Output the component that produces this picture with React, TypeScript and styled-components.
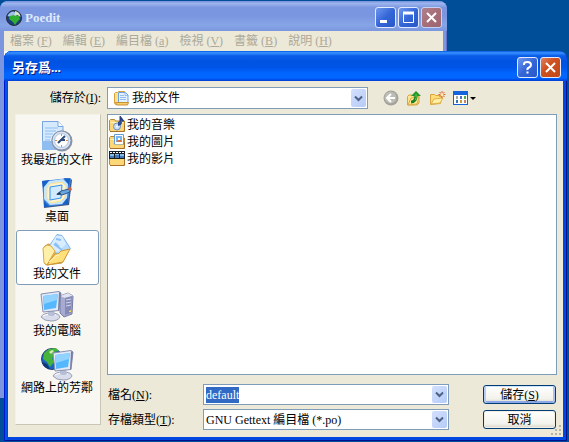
import React from "react";
import styled, { createGlobalStyle, css } from "styled-components";

const Global = createGlobalStyle`
  * { box-sizing: border-box; }
  html, body, #root { height: 100%; margin: 0; }
  body { overflow: hidden; }
  button, input, select { font: inherit; color: inherit; margin: 0; }
`;

const Desktop = styled.div`
  position: relative;
  height: 100%;
  background: #004e98;
  font: 12px/16px "Liberation Serif", "Noto Sans CJK TC", serif;
  color: #000;
`;

const Window = styled.section<{ $active?: boolean }>`
  position: absolute;
  display: flex;
  flex-direction: column;
  border-radius: 8px 8px 0 0;
  ${(p) =>
    p.$active
      ? css`
          inset: 51px 2px 1px 4px;
          padding: 0 4px 4px;
          background: #0046e0;
          box-shadow: inset 1px 0 #0019cf, inset -1px -1px #00138c, inset 3px 0 #0054e3;
        `
      : css`
          inset: 1px 122px 44px 0;
          padding: 0 4px 4px;
          background: #7b96df;
          box-shadow: inset -1px 0 #6375c8;
        `}
`;

const TitleBar = styled.header<{ $active?: boolean }>`
  display: flex;
  align-items: center;
  gap: 2px;
  flex: none;
  height: 30px;
  margin: 0 -4px;
  padding: 3px 5px 0 5px;
  border-radius: 8px 8px 0 0;
  color: #dfe9fa;
  background: linear-gradient(#7590dc 0, #9db5ee 8%, #7b96e0 22%, #7b96e0 50%, #86a5e6 80%, #7b96df 100%);
  ${(p) =>
    p.$active &&
    css`
      padding: 3px 6px 0 8px;
      color: #fff;
      text-shadow: 1px 1px #0a1883;
      background: linear-gradient(#0058e6 0, #3a93ff 6%, #0a5ce8 16%, #0053e1 35%, #0055e8 55%, #0066ff 75%, #0066ff 90%, #003dd7 100%);
    `}
`;

const Title = styled.h1`
  flex: 1;
  margin: 0;
  font-size: 13px;
  line-height: 18px;
  font-weight: bold;
`;

const CaptionButton = styled.button<{ $tone: "blue" | "red" | "faded" }>`
  display: block;
  width: 21px;
  height: 21px;
  padding: 0;
  border: 1px solid #fff;
  border-radius: 3px;
  background: ${(p) =>
    p.$tone === "red"
      ? "linear-gradient(135deg, #e08060, #d0511f 40%, #c04818)"
      : p.$tone === "faded"
        ? "linear-gradient(135deg, #b08090, #a66f78 50%, #9c6470)"
        : "linear-gradient(135deg, #6f98ee, #3566d8 50%, #2858c8)"};
  border-color: ${(p) => (p.$tone === "faded" ? "#c5d2f4" : "#e2eaff")};
  svg { display: block; width: 19px; height: 19px; }
`;

const MenuBar = styled.nav`
  display: flex;
  gap: 11px;
  height: 20px;
  padding-left: 6px;
  background: #ece9d8;
`;

const MenuItem = styled.button`
  flex: none;
  padding: 0;
  border: 0;
  background: none;
  color: #aca899;
  line-height: 20px;
  white-space: nowrap;
`;

const AppBody = styled.div`
  flex: 1;
  background: #fff;
`;

const DialogBody = styled.form`
  flex: 1;
  min-height: 0;
  display: grid;
  grid-template-columns: 86px minmax(0, 1fr);
  grid-template-rows: 20px minmax(0, 1fr);
  column-gap: 6px;
  row-gap: 6px;
  padding: 7px 6px 3px 7px;
  background: #ece9d8;
`;

const FieldLabel = styled.label<{ $end?: boolean }>`
  white-space: nowrap;
  line-height: 20px;
  text-align: ${(p) => (p.$end ? "right" : "left")};
`;

const Toolbar = styled.div`
  display: flex;
  align-items: center;
`;

const Combo = styled.div`
  position: relative;
  display: flex;
  align-items: center;
  height: 21px;
  border: 1px solid #7f9db9;
  background: #fff;
`;

const LocationCombo = styled(Combo)`
  flex: 0 1 261px;
  height: 22px;
  margin-right: 15px;
  padding-left: 5px;
  > svg { flex: none; }
`;

const Select = styled.select`
  appearance: none;
  flex: 1;
  min-width: 0;
  height: 18px;
  padding: 0 18px 0 2px;
  border: 0;
  outline: 0;
  background: transparent;
`;

const FileInput = styled.input`
  flex: 1;
  min-width: 0;
  height: 16px;
  padding: 0 18px 0 2px;
  border: 0;
  outline: 0;
  background: transparent;
  &::selection { color: #fff; background: #316ac5; }
`;

const Arrow = styled.span`
  position: absolute;
  right: 1px;
  top: 1px;
  bottom: 1px;
  width: 15px;
  display: grid;
  place-items: center;
  border-radius: 2px;
  background: linear-gradient(135deg, #d3e0fd, #b5cbf8);
  pointer-events: none;
`;

const ToolButton = styled.button`
  display: flex;
  align-items: center;
  height: 20px;
  margin-right: 7px;
  padding: 0;
  border: 0;
  background: none;
`;

const Places = styled.nav`
  display: flex;
  flex-direction: column;
  margin-bottom: 9px;
  border: 1px solid;
  border-color: #f4f2e8 #c9c6b8 #c9c6b8 #f4f2e8;
  background: #f8f7f2;
`;

const Place = styled.button<{ $selected?: boolean }>`
  display: flex;
  flex-direction: column;
  align-items: center;
  flex: 0 0 57px;
  margin-right: 1px;
  padding: 3px 1px 0 0;
  border: 1px solid transparent;
  border-radius: 3px;
  background: transparent;
  line-height: 15px;
  white-space: nowrap;
  ${(p) =>
    p.$selected &&
    css`
      flex-basis: 55px;
      margin: 1px 1px 1px 0;
      padding-top: 2px;
      border-color: #7f9db9;
      background: #fff;
    `}
  svg { flex: none; }
`;

const Main = styled.div`
  display: flex;
  flex-direction: column;
  min-width: 0;
`;

const FileList = styled.ul`
  flex: 1;
  margin: 0;
  padding: 1px;
  list-style: none;
  border: 1px solid #7f9db9;
  background: #fff;
`;

const FileRow = styled.li`
  display: flex;
  align-items: center;
  gap: 1px;
  height: 17px;
`;

const Fields = styled.div`
  display: grid;
  grid-template-columns: 94px minmax(0, 246px) minmax(73px, 1fr);
  grid-auto-rows: 21px;
  align-items: center;
  row-gap: 4px;
  column-gap: 1px;
  padding: 9px 1px 4px;
`;

const Action = styled.button<{ $primary?: boolean }>`
  justify-self: end;
  width: 73px;
  height: 19px;
  padding: 0;
  border: 1px solid #003c74;
  border-radius: 3px;
  line-height: 16px;
  background: linear-gradient(#fff, #f3f2ec 75%, #d8d3c8);
  box-shadow: ${(p) => (p.$primary ? "inset 0 1px #cee7ff, inset 2px 0 #b6cdf2, inset -2px 0 #a9c2ee, inset 0 -2px #8aa9e6" : "inset 0 0 0 1px #f0eee5")};
`;

const Grip = styled.svg`
  position: absolute;
  right: 5px;
  bottom: 5px;
`;

const Chevron = () => (
  <Arrow>
    <svg width="9" height="7" viewBox="0 0 9 7" aria-hidden="true">
      <path d="M1 1.5 4.5 5 8 1.5" fill="none" stroke="#4d6185" strokeWidth="2" />
    </svg>
  </Arrow>
);

type CaptionKind = "min" | "max" | "close" | "help";
const Caption = ({ kind }: { kind: CaptionKind }) => (
  <svg viewBox="0 0 19 19" fill="none" stroke="#fff" strokeWidth="2" aria-hidden="true">
    {kind === "min" && <path d="M4 13.5h7" strokeWidth="3" />}
    {kind === "max" && (
      <>
        <path d="M4 5h11" strokeWidth="3" />
        <path d="M4.5 4v10.500h10V4" strokeWidth="1" />
      </>
    )}
    {kind === "close" && <path d="m5 5 9 9m0-9-9 9" />}
    {kind === "help" && <path d="M6 7V6q0-2 3.500-2T13 7q0 1.500-2 2.500T9.500 12M9.500 13.500v2" />}
  </svg>
);

const Globe = () => (
  <svg width="18" height="18" viewBox="0 0 18 18" aria-hidden="true">
    <circle cx="9" cy="9" r="7.500" fill="#1c3f7c" stroke="#272d38" />
    <path d="M2.500 7q2-4.500 6-4.500l3 2-4 4z" fill="#9fbfe8" />
    <path d="m5 7 4-1 5 1 1 3-3 3-2 3-2-3-4-3z" fill="#2fb032" />
    <path d="M10 2q5 1 5.500 6l-3-2-3 1z" fill="#d5e6c2" />
  </svg>
);

const DocumentsIcon = () => (
  <svg width="17" height="16" viewBox="0 0 17 16" aria-hidden="true">
    <path d="M1.500 13V3.500l1-1h2l1-1h6V5l-6 9.500h-3z" fill="#ffe38b" stroke="#d9a03c" />
    <path d="M5.500 2.500h7l2.500 2.500v7.500H5.500z" fill="#e4f1ff" stroke="#6ea2df" />
    <path d="M12 3v2.500h3M7 5.500h4M7 7.500h6M7 9.500h6" fill="none" stroke="#94bdee" />
    <path d="M2.500 12.500h13l-1 2.500H3.500z" fill="#f7cf68" stroke="#c9913a" />
  </svg>
);

const FolderIcon = ({ kind }: { kind: "music" | "pictures" | "video" }) => (
  <svg width="17" height="17" viewBox="0 0 17 17" aria-hidden="true">
    <path d="M.5 14V4.500l1-1h4l1 1.500h9v9l-1 1.500h-13z" fill="#fbd778" stroke="#bf852f" />
    <path d="M1.500 6.500h13" stroke="#fff2bd" />
    <path d="M1 15.500h14.500V9" fill="none" stroke="#a9712a" />
    {kind === "music" && (
      <>
        <circle cx="8" cy="10.500" r="3.500" fill="#c9dcf5" stroke="#7391bd" />
        <circle cx="8" cy="10.500" r="1" fill="#fff" />
        <path d="M11.500 8V1.500l3 4" fill="none" stroke="#263d80" strokeWidth="2" />
        <path d="m9 6 2-1 2 1-1 3-3 1z" fill="#2d4f96" />
      </>
    )}
    {kind === "pictures" && (
      <>
        <path d="M5.500 1.500h9v10h-9z" fill="#fff" stroke="#659bd5" />
        <path d="M7 3h6v6H7z" fill="#7ab6f3" />
        <path d="M9 5h2v2H9z" fill="#fff" />
        <path d="m7 9 2-2h3l1 2z" fill="#cc7447" />
        <path d="M2 11.500h12V15H2z" fill="#fbd778" />
      </>
    )}
    {kind === "video" && (
      <>
        <path d="M0 1h16v8H0z" fill="#171d25" />
        <path d="M1 2.500h14" stroke="#fff" strokeDasharray="2 1" />
        <path d="M1 4h4v4H1zM6 4h4v4H6zM11 4h4v4h-4z" fill="#4479b8" />
        <path d="M1 4h4v2H1zM6 4h4v1H6zM11 4h4v2h-4z" fill="#88b8ea" />
      </>
    )}
  </svg>
);

const Screen = () => (
  <>
    <path d="M1 27q2-4 10-4t9 4q-2 4-9 4t-10-4z" fill="#d9ddeb" stroke="#969cb4" />
    <path d="M3 26q5-3 13-1" fill="none" stroke="#fff" />
    <path d="m8 20 6-1 1 6q-3 2-7 0z" fill="#b6bdd5" />
    <path d="m1 4 18-2.500 2 1.500-2 17.500L3 22z" fill="#e4e9f8" stroke="#8891b0" />
    <path d="m3 6 15-2-2 14-12 2z" fill="#55b8ff" />
    <path d="m3 6 15-2-1 6L4 14z" fill="#91d2ff" />
    <path d="m19 2 2 1-2 18-1-1z" fill="#747da7" />
  </>
);

type PlaceKind = "recent" | "desktop" | "documents" | "computer" | "network";
const PlaceIcon = ({ kind }: { kind: PlaceKind }) => (
  <svg width="34" height="34" viewBox="0 0 34 34" aria-hidden="true">
    {kind === "recent" && (
      <>
        <path d="M2.500 2.500H18l5 5v23H2.500z" fill="#d6eaff" stroke="#78a5df" />
        <path d="M2 22h21v9H2z" fill="#90bdf0" />
        <path d="M18 2.500v5h5" fill="#fff" stroke="#78a5df" />
        <path d="M5 9h13M5 12h11M5 15h8M5 18h6M5 21h5M5 24h5" stroke="#8fbcf0" />
        <circle cx="22" cy="22" r="10.500" fill="#8995ab" />
        <circle cx="21.500" cy="21.500" r="9.500" fill="#dce3ee" stroke="#8391a9" />
        <circle cx="21.500" cy="21.500" r="7" fill="#fff" stroke="#a8c5e7" />
        <path d="M21.500 15v2m0 9v2M15 21.500h2m9 0h2" stroke="#ef863a" />
        <path d="m25 17-4 4h4m-4 0-3 3" fill="none" stroke="#304a79" strokeWidth="2" />
      </>
    )}
    {kind === "desktop" && (
      <>
        <path d="m3 6 27-4 2 2-3 25-25 3z" fill="#3c5583" />
        <path d="M2 5 29 2l2 1-3 25-24 3z" fill="#4286de" />
        <path d="m2 5 8-1-7 8zM24 2l6 1-1 7zM4 25l6 6-6 0zM28 21v7l-6 1z" fill="#1861c5" />
        <path d="m9 5 14-2 5 5-1 14-5 6-12 1-6-6V11z" fill="#c4e4ff" />
        <path d="m10 8 12-2 4 4-1 11-4 4-10 2-4-5 0-10z" fill="#fff4ca" stroke="#ffe290" />
        <path d="m10 11 12-2-1 13-11 2z" fill="#d1eaff" stroke="#3a92ed" />
        <path d="m17 18 4-3 8-2 1 3-8 3z" fill="#69a7e1" stroke="#2b5792" />
        <path d="m28 12 3-1 1 3-3 1z" fill="#cf6340" />
        <path d="m16 19 4-3 1 2z" fill="#29343d" />
      </>
    )}
    {kind === "documents" && (
      <>
        <path d="m4 14 4-3 5 1 16 3-7 15-15 2-2-1z" fill="#eab54c" stroke="#cc963a" />
        <path d="m17 1.500 5 1 8.500 13-8 8-15-8z" fill="#b7dcff" stroke="#84b5ea" />
        <path d="m16 3 6 0 4 8-8 8-9-4z" fill="#d9edff" />
        <path d="m16 6 5 1m-6 3 4 4m-5-3 8 6" fill="none" stroke="#8cc1f6" strokeWidth="2" />
        <path d="m3 15 4-3 4 1 4 5-8 14-3-2z" fill="#fff0a9" stroke="#dca743" />
        <path d="M15 21h3l3-3 9-2-7 13-16 3z" fill="#ffe07a" stroke="#cc963a" />
        <path d="m9 29 8-7 2 0" fill="none" stroke="#fff7cb" />
      </>
    )}
    {kind === "computer" && (
      <>
        <path d="m20 6 8-3 5 3-1 18-8 3-4-4z" fill="#a7abd1" stroke="#777da4" />
        <path d="m20 6 8-3 5 3-8 2z" fill="#e2e3f1" />
        <path d="m25 8 7-2-1 17-6 2z" fill="#858bb8" />
        <path d="m26 10 5-1m-5 4 5-1m-5 4 5-1" stroke="#d4d8ee" />
        <path d="m29 21 2-1v2h-2z" fill="#f4db55" />
        <Screen />
      </>
    )}
    {kind === "network" && (
      <>
        <circle cx="12" cy="12" r="10.500" fill="#1765c1" stroke="#25407a" />
        <path d="m4 6 5-4 7-1 3 3-5 1 2 4-4 2 2 4-4 5-3-5-4-3z" fill="#45b33c" />
        <path d="m9 5 3-2 2 1-3 3z" fill="#d5eca7" />
        <path d="M2 15q1 6 8 7l-3-5z" fill="#0d3976" />
        <g transform="translate(12 2)"><Screen /></g>
      </>
    )}
  </svg>
);

const BackIcon = () => (
  <svg width="16" height="16" viewBox="0 0 16 16" aria-hidden="true">
    <circle cx="8" cy="8" r="7.500" fill="#a3a29a" />
    <circle cx="7.500" cy="7.500" r="6" fill="#bdbcb4" />
    <path d="M12 8H4m4-4L4 8l4 4" fill="none" stroke="#fff" strokeWidth="2" />
  </svg>
);

const UpIcon = () => (
  <svg width="16" height="16" viewBox="0 0 16 16" aria-hidden="true">
    <path d="M1.500 6.500 3 5h3l1 1h6v7l-2 2H1.500z" fill="#ffe48c" stroke="#d9a53f" />
    <path d="m2 15 3-7 8-1-2 7z" fill="#ffe995" stroke="#dba947" />
    <path d="M5 12q5 0 5-7" fill="none" stroke="#1d7f26" strokeWidth="3" />
    <path d="m5 6 5-5 5 5z" fill="#26962c" />
    <path d="M9.500 10q1-2 .5-6" fill="none" stroke="#67cf4c" />
  </svg>
);

const NewFolderIcon = () => (
  <svg width="17" height="16" viewBox="0 0 17 16" aria-hidden="true">
    <path d="M1.500 4.500h4l1 1h6l-1 8-10 1z" fill="#ffdc78" stroke="#d9a53f" />
    <path d="m2 14 3-5 9-1-3 5z" fill="#fff0a4" stroke="#dfb14e" />
    <path d="M13 1v7M9.500 4.500h7M10.500 2l5 5m0-5-5 5" stroke="#d8662a" />
    <circle cx="13" cy="4.500" r="1.500" fill="#fff0bd" />
  </svg>
);

const ViewsIcon = () => (
  <svg width="23" height="16" viewBox="0 0 23 16" aria-hidden="true">
    <path d="M0 1h15v14H0z" fill="#1563dc" />
    <path d="M1 5h13v9H1z" fill="#fff" />
    <path d="M3 6h2v3H3z" fill="#a5a5a5" />
    <path d="M7 6h2v3H7z" fill="#5171bd" />
    <path d="M11 6h2v3h-2z" fill="#51a84c" />
    <path d="M3 10h2v3H3z" fill="#3972be" />
    <path d="M7 10h2v3H7z" fill="#c79b36" />
    <path d="M11 10h2v3h-2z" fill="#ca8362" />
    <path d="M17 7h6l-3 3z" fill="#000" />
  </svg>
);

const menus = [
  ["檔案", "F"],
  ["編輯", "E"],
  ["編目檔", "a"],
  ["檢視", "V"],
  ["書籤", "B"],
  ["說明", "H"],
];

const places: { kind: PlaceKind; name: string }[] = [
  { kind: "recent", name: "我最近的文件" },
  { kind: "desktop", name: "桌面" },
  { kind: "documents", name: "我的文件" },
  { kind: "computer", name: "我的電腦" },
  { kind: "network", name: "網路上的芳鄰" },
];

const folders = [
  { kind: "music", name: "我的音樂" },
  { kind: "pictures", name: "我的圖片" },
  { kind: "video", name: "我的影片" },
] as const;

export default function App() {
  const fileName = React.useRef<HTMLInputElement>(null);
  React.useEffect(() => {
    fileName.current?.focus();
    fileName.current?.select();
  }, []);

  return (
    <Desktop>
      <Global />
      <Window>
        <TitleBar>
          <Globe />
          <Title>Poedit</Title>
          <CaptionButton $tone="blue" aria-label="Minimize"><Caption kind="min" /></CaptionButton>
          <CaptionButton $tone="blue" aria-label="Maximize"><Caption kind="max" /></CaptionButton>
          <CaptionButton $tone="faded" aria-label="Close"><Caption kind="close" /></CaptionButton>
        </TitleBar>
        <MenuBar>
          {menus.map(([name, key]) => (
            <MenuItem key={key}>{name} (<u>{key}</u>)</MenuItem>
          ))}
        </MenuBar>
        <AppBody />
      </Window>

      <Window $active role="dialog" aria-labelledby="dialog-title">
        <TitleBar $active>
          <Title id="dialog-title">另存爲...</Title>
          <CaptionButton $tone="blue" aria-label="Help"><Caption kind="help" /></CaptionButton>
          <CaptionButton $tone="red" aria-label="Close"><Caption kind="close" /></CaptionButton>
        </TitleBar>
        <DialogBody onSubmit={(e) => e.preventDefault()}>
          <FieldLabel $end htmlFor="location">儲存於(<u>I</u>):</FieldLabel>
          <Toolbar>
            <LocationCombo>
              <DocumentsIcon />
              <Select id="location"><option>我的文件</option></Select>
              <Chevron />
            </LocationCombo>
            <ToolButton type="button" aria-label="Back"><BackIcon /></ToolButton>
            <ToolButton type="button" aria-label="Up one level"><UpIcon /></ToolButton>
            <ToolButton type="button" aria-label="New folder"><NewFolderIcon /></ToolButton>
            <ToolButton type="button" aria-label="Views"><ViewsIcon /></ToolButton>
          </Toolbar>
          <Places>
            {places.map((p) => (
              <Place key={p.kind} type="button" $selected={p.kind === "documents"}>
                <PlaceIcon kind={p.kind} />
                {p.name}
              </Place>
            ))}
          </Places>
          <Main>
            <FileList>
              {folders.map((f) => (
                <FileRow key={f.kind}><FolderIcon kind={f.kind} />{f.name}</FileRow>
              ))}
            </FileList>
            <Fields>
              <FieldLabel htmlFor="file-name">檔名(<u>N</u>):</FieldLabel>
              <Combo>
                <FileInput id="file-name" ref={fileName} defaultValue="default" />
                <Chevron />
              </Combo>
              <Action $primary type="submit">儲存(<u>S</u>)</Action>
              <FieldLabel htmlFor="file-type">存檔類型(<u>T</u>):</FieldLabel>
              <Combo>
                <Select id="file-type"><option>GNU Gettext 編目檔 (*.po)</option></Select>
                <Chevron />
              </Combo>
              <Action type="button">取消</Action>
            </Fields>
          </Main>
        </DialogBody>
        <Grip width="11" height="11" viewBox="0 0 11 11" aria-hidden="true">
          <path d="M8 0h2v2H8zM4 4h2v2H4zM8 4h2v2H8zM0 8h2v2H0zM4 8h2v2H4zM8 8h2v2H8z" fill="#b8b4a3" />
        </Grip>
      </Window>
    </Desktop>
  );
}
